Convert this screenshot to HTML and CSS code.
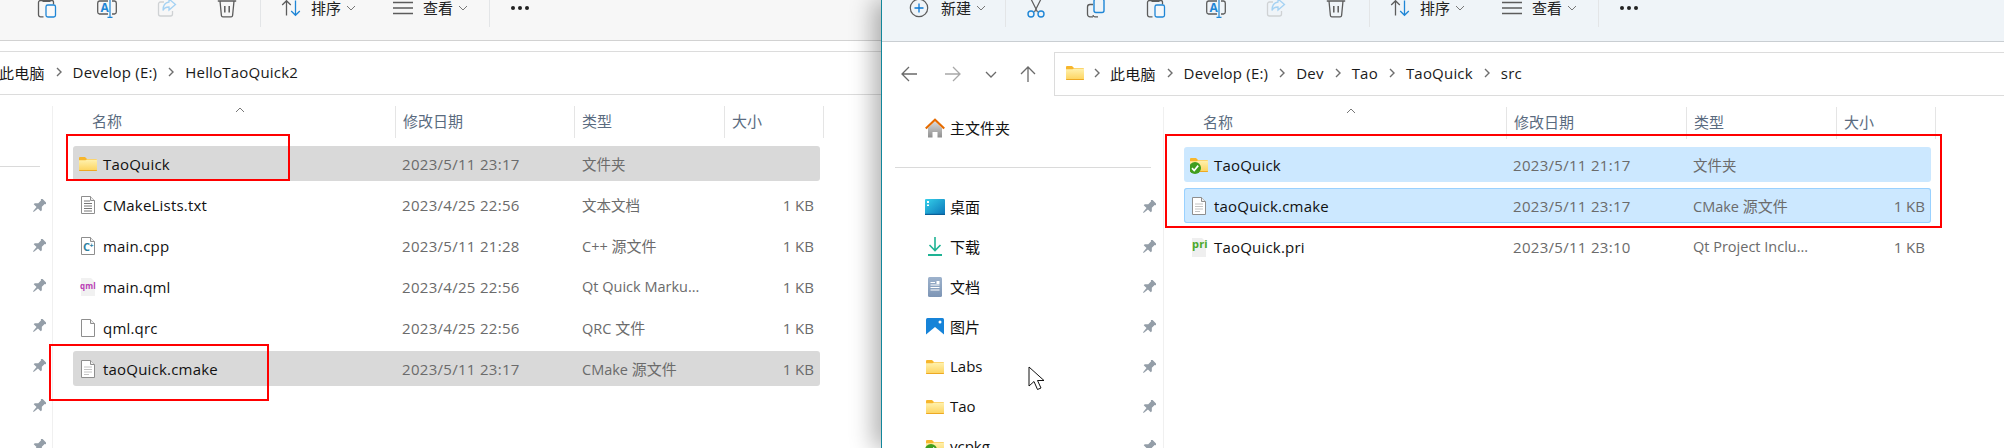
FILE: index.html
```html
<!DOCTYPE html>
<html lang="zh-CN">
<head>
  <meta charset="utf-8">
  <title>TaoQuick</title>
  <link rel="stylesheet" href="styles.css">
</head>
<body>
<svg class="defs" aria-hidden="true">
  <defs>
    <linearGradient id="folderFill" x1="0" y1="0" x2="0" y2="1"><stop offset="0" stop-color="#fff2b0"/><stop offset="1" stop-color="#fdd35c"/></linearGradient>
    <linearGradient id="deskFill" x1="0" y1="0" x2="1" y2="1"><stop offset="0" stop-color="#35d0ea"/><stop offset="1" stop-color="#0a74b8"/></linearGradient>
    <linearGradient id="docFill" x1="0" y1="0" x2="0" y2="1"><stop offset="0" stop-color="#9db2cc"/><stop offset="1" stop-color="#7d95b5"/></linearGradient>
    <linearGradient id="homeFill" x1="0" y1="0" x2="0" y2="1"><stop offset="0" stop-color="#d8d8d8"/><stop offset="1" stop-color="#8f8f8f"/></linearGradient>
    <symbol id="folder" viewBox="0 0 18 14">
      <path d="M0 1a1 1 0 0 1 1-1h5l2 2h9a1 1 0 0 1 1 1v3H0z" fill="#f7b62c"/>
      <path d="M0 3.2h6.5L8 2.4h10V13a1 1 0 0 1-1 1H1a1 1 0 0 1-1-1z" fill="url(#folderFill)"/>
      <path d="M0 13h18v.2a.8.8 0 0 1-.8.8H.8a.8.8 0 0 1-.8-.8z" fill="#eda923"/>
    </symbol>
    <symbol id="check" viewBox="0 0 12 12">
      <circle cx="6" cy="6" r="6" fill="#3f9e1f"/>
      <path d="M3 6.2l2.2 2.3L9.2 3.6" fill="none" stroke="#fff" stroke-width="1.7"/>
    </symbol>
    <symbol id="doc" viewBox="0 0 16 20">
      <path d="M1.5 1.5h9l4 4v13h-13z" fill="#fff" stroke="#8e8e8e"/>
      <path d="M10.5 1.5v4h4" fill="#eee" stroke="#8e8e8e"/>
    </symbol>
    <symbol id="pin" viewBox="0 0 14 14">
      <g transform="rotate(45 7 7)"><path d="M3.500-.5h7V1l-1 .5v4L12 8v1.500H8L7.400 15h-.8L6 9.500H2V8l2.500-2.500v-4l-1-.5z" fill="#949ea8"/></g>
    </symbol>
    <symbol id="crumb" viewBox="0 0 6 10">
      <path d="M1 1l4 4-4 4" fill="none" stroke="#6e6e6e" stroke-width="1.4"/>
    </symbol>
    <symbol id="drop" viewBox="0 0 10 6">
      <path d="M1 1l4 4 4-4" fill="none" stroke="#777" stroke-width="1"/>
    </symbol>
    <symbol id="i-paste" viewBox="0 0 20 20">
      <path d="M6.500 18.800H3.500a2 2 0 0 1-2-2V4.500a2 2 0 0 1 2-2H15a1.500 1.500 0 0 1 1.500 1.500v2.500" fill="none" stroke="#5c5c5c" stroke-width="1.300"/>
      <path d="M5.500 1h8v3h-8z" fill="#5c5c5c"/>
      <rect x="9" y="7" width="9.500" height="12" rx="1.800" fill="#fff" fill-opacity=".3" stroke="#1f86d6" stroke-width="1.300"/>
    </symbol>
    <symbol id="i-rename" viewBox="0 0 20 20">
      <path d="M11 16H2.500A2 2 0 0 1 .7 14V5a2 2 0 0 1 1.800-2H11M15 3h2.500a2 2 0 0 1 1.800 2v9a2 2 0 0 1-1.800 2H15" fill="none" stroke="#5c5c5c" stroke-width="1.300"/>
      <text class="icon-a" x="3.500" y="14">A</text>
      <path d="M13 1v18M10.500 19.300h5M10.500 1h5" fill="none" stroke="#1f86d6" stroke-width="1.200"/>
    </symbol>
    <symbol id="i-share" viewBox="0 0 20 20">
      <path d="M7 4H3.500a2 2 0 0 0-2 2v10a2 2 0 0 0 2 2h10a2 2 0 0 0 2-2v-3" fill="none" stroke="#cfd2d4" stroke-width="1.300"/>
      <path d="M12 1l6.500 5.500L12 12V9c-3 0-5 1-6 3.500C6 8 8 4.500 12 4z" fill="none" stroke="#a5d2f3" stroke-width="1.300"/>
    </symbol>
    <symbol id="i-delete" viewBox="0 0 20 20">
      <path d="M.8 3h18.400M3 3l1.400 14.500a1.500 1.500 0 0 0 1.500 1.300h8.200a1.500 1.500 0 0 0 1.500-1.300L17 3" fill="none" stroke="#5c5c5c" stroke-width="1.300"/>
      <path d="M7.800 8v6.500M12.200 8v6.500" fill="none" stroke="#5c5c5c" stroke-width="1.500"/>
    </symbol>
    <symbol id="i-cut" viewBox="0 0 20 20">
      <path d="M4.500 0l7 14M15.500 0l-7 14" fill="none" stroke="#5c5c5c" stroke-width="1.200"/>
      <circle cx="5" cy="16" r="3" fill="none" stroke="#1f86d6" stroke-width="1.400"/>
      <circle cx="15" cy="16" r="3" fill="none" stroke="#1f86d6" stroke-width="1.400"/>
    </symbol>
    <symbol id="i-copy" viewBox="0 0 20 20">
      <path d="M7 18.800H4a2.500 2.500 0 0 1-2.500-2.500V9A2.500 2.500 0 0 1 4 6.500h3" fill="none" stroke="#5c5c5c" stroke-width="1.300"/>
      <path d="M7 17a2 2 0 0 0 2 1.800h3" fill="none" stroke="#5c5c5c" stroke-width="1.300"/>
      <rect x="8" y="1" width="10" height="13.500" rx="2" fill="none" stroke="#1f86d6" stroke-width="1.400"/>
    </symbol>
    <symbol id="i-sort" viewBox="0 0 20 20">
      <path d="M5.500 17.500V3M1.200 7l4.300-4.300L9.800 7" fill="none" stroke="#5c5c5c" stroke-width="1.300"/>
      <path d="M14.500 2.500V17M10.200 13l4.300 4.300 4.300-4.300" fill="none" stroke="#1f86d6" stroke-width="1.300"/>
    </symbol>
    <symbol id="i-view" viewBox="0 0 20 20">
      <path d="M0 4.500h20M0 10h20M0 15.500h20" fill="none" stroke="#5c5c5c" stroke-width="1.500"/>
    </symbol>
    <symbol id="i-new" viewBox="0 0 20 20">
      <circle cx="10" cy="10" r="8.700" fill="none" stroke="#5c5c5c" stroke-width="1.200"/>
      <path d="M10 5.500v9M5.500 10h9" fill="none" stroke="#0a78d4" stroke-width="1.300"/>
    </symbol>
    <symbol id="i-left" viewBox="0 0 16 16">
      <path d="M16 8H1M8 1L1 8l7 7" fill="none" stroke="#6a6a6a" stroke-width="1.300"/>
    </symbol>
    <symbol id="i-right" viewBox="0 0 16 16">
      <path d="M0 8h15M8 1l7 7-7 7" fill="none" stroke="#a8a8a8" stroke-width="1.300"/>
    </symbol>
    <symbol id="i-up" viewBox="0 0 16 16">
      <path d="M8 16V1M1 8l7-7 7 7" fill="none" stroke="#6a6a6a" stroke-width="1.300"/>
    </symbol>
  </defs>
</svg>

<div class="desk">
  <div class="win win-left">
    <div class="toolbar">
      <div class="slots">
        <span class="slot"><svg class="ti"><use href="#i-paste"/></svg></span>
        <span class="slot"><svg class="ti"><use href="#i-rename"/></svg></span>
        <span class="slot"><svg class="ti"><use href="#i-share"/></svg></span>
        <span class="slot"><svg class="ti"><use href="#i-delete"/></svg></span>
      </div>
      <i class="tsep"></i>
      <span class="tool tool-sort"><svg class="ti"><use href="#i-sort"/></svg><b>排序</b><svg class="drop"><use href="#drop"/></svg></span>
      <span class="tool tool-view"><svg class="ti"><use href="#i-view"/></svg><b>查看</b><svg class="drop"><use href="#drop"/></svg></span>
      <i class="tsep"></i>
      <span class="dots"><i></i><i></i><i></i></span>
    </div>

    <div class="addr">
      <span class="crumb zh">此电脑</span><svg class="chev"><use href="#crumb"/></svg>
      <span class="crumb">Develop (E:)</span><svg class="chev"><use href="#crumb"/></svg>
      <span class="crumb">HelloTaoQuick2</span>
    </div>

    <div class="main">
      <div class="side">
        <div class="side-row"></div>
        <hr class="side-sep">
        <div class="side-row"><svg class="pin"><use href="#pin"/></svg></div>
        <div class="side-row"><svg class="pin"><use href="#pin"/></svg></div>
        <div class="side-row"><svg class="pin"><use href="#pin"/></svg></div>
        <div class="side-row"><svg class="pin"><use href="#pin"/></svg></div>
        <div class="side-row"><svg class="pin"><use href="#pin"/></svg></div>
        <div class="side-row"><svg class="pin"><use href="#pin"/></svg></div>
        <div class="side-row"><svg class="pin"><use href="#pin"/></svg></div>
      </div>

      <div class="list">
        <div class="head">
          <span class="hcell zh hname">名称<svg class="caret" viewBox="0 0 10 6"><path d="M1 5l4-4 4 4" fill="none" stroke="#777"/></svg></span>
          <span class="hcell zh">修改日期</span>
          <span class="hcell zh">类型</span>
          <span class="hcell zh hlast">大小</span>
        </div>
        <div class="row sel-gray">
          <span class="name"><svg class="fi fi-folder"><use href="#folder"/></svg>TaoQuick</span>
          <span class="date">2023/5/11 23:17</span><span class="type zh">文件夹</span><span class="size"></span>
        </div>
        <div class="row">
          <span class="name">
            <svg class="fi" viewBox="0 0 18 20"><use href="#doc" x="1" width="16" height="20"/><path d="M5 6h6M5 8.500h8M5 11h8M5 13.500h8M5 16h8" stroke="#777" fill="none"/></svg>CMakeLists.txt</span>
          <span class="date">2023/4/25 22:56</span><span class="type zh">文本文档</span><span class="size">1 KB</span>
        </div>
        <div class="row">
          <span class="name">
            <svg class="fi" viewBox="0 0 18 20"><use href="#doc" x="1" width="16" height="20"/><text class="glyph-cpp" x="4" y="15">C</text><text class="glyph-plus" x="10.500" y="12">+</text></svg>main.cpp</span>
          <span class="date">2023/5/11 21:28</span><span class="type">C++ <span class="zh">源文件</span></span><span class="size">1 KB</span>
        </div>
        <div class="row">
          <span class="name">
            <svg class="fi" viewBox="0 0 18 20"><path d="M2 1h10l4 4v14H2z" fill="#f1f1f1"/><text class="glyph-qml" x="1" y="12">qml</text></svg>main.qml</span>
          <span class="date">2023/4/25 22:56</span><span class="type">Qt Quick Marku...</span><span class="size">1 KB</span>
        </div>
        <div class="row">
          <span class="name">
            <svg class="fi" viewBox="0 0 18 20"><use href="#doc" x="1" width="16" height="20"/></svg>qml.qrc</span>
          <span class="date">2023/4/25 22:56</span><span class="type">QRC <span class="zh">文件</span></span><span class="size">1 KB</span>
        </div>
        <div class="row sel-gray">
          <span class="name">
            <svg class="fi" viewBox="0 0 18 20"><use href="#doc" x="1" width="16" height="20"/><path d="M5 8h8M5 10.500h8M5 13h8M5 15.500h5" stroke="#c4c4c4" fill="none"/></svg>taoQuick.cmake</span>
          <span class="date">2023/5/11 23:17</span><span class="type">CMake <span class="zh">源文件</span></span><span class="size">1 KB</span>
        </div>
      </div>
    </div>
  </div>

  <div class="win win-right">
    <div class="toolbar">
      <span class="tool tool-new"><svg class="ti"><use href="#i-new"/></svg><b>新建</b><svg class="drop"><use href="#drop"/></svg></span>
      <i class="tsep"></i>
      <div class="slots">
        <span class="slot"><svg class="ti"><use href="#i-cut"/></svg></span>
        <span class="slot"><svg class="ti"><use href="#i-copy"/></svg></span>
        <span class="slot"><svg class="ti"><use href="#i-paste"/></svg></span>
        <span class="slot"><svg class="ti"><use href="#i-rename"/></svg></span>
        <span class="slot"><svg class="ti"><use href="#i-share"/></svg></span>
        <span class="slot"><svg class="ti"><use href="#i-delete"/></svg></span>
      </div>
      <i class="tsep"></i>
      <span class="tool tool-sort"><svg class="ti"><use href="#i-sort"/></svg><b>排序</b><svg class="drop"><use href="#drop"/></svg></span>
      <span class="tool tool-view"><svg class="ti"><use href="#i-view"/></svg><b>查看</b><svg class="drop"><use href="#drop"/></svg></span>
      <i class="tsep"></i>
      <span class="dots"><i></i><i></i><i></i></span>
    </div>

    <div class="addr-wrap">
      <div class="nav">
        <svg class="na"><use href="#i-left"/></svg>
        <svg class="na na-fwd"><use href="#i-right"/></svg>
        <svg class="na-down" viewBox="0 0 12 7"><path d="M1 1l5 5 5-5" fill="none" stroke="#6a6a6a" stroke-width="1.300"/></svg>
        <svg class="na na-up"><use href="#i-up"/></svg>
      </div>
      <div class="addr addr-box">
        <svg class="fi fi-folder"><use href="#folder"/></svg><svg class="chev chev-first"><use href="#crumb"/></svg>
        <span class="crumb zh">此电脑</span><svg class="chev"><use href="#crumb"/></svg>
        <span class="crumb">Develop (E:)</span><svg class="chev"><use href="#crumb"/></svg>
        <span class="crumb">Dev</span><svg class="chev"><use href="#crumb"/></svg>
        <span class="crumb">Tao</span><svg class="chev"><use href="#crumb"/></svg>
        <span class="crumb">TaoQuick</span><svg class="chev"><use href="#crumb"/></svg>
        <span class="crumb">src</span>
      </div>
    </div>

    <div class="main">
      <div class="side">
        <div class="side-row">
          <svg class="si" viewBox="0 0 20 20"><path d="M3 10l7-6.500 7 6.500v9.500h-4.500V14h-5v5.500H3z" fill="url(#homeFill)"/><path d="M.8 10.500L10 1.800l9.200 8.700" fill="none" stroke="#e56b00" stroke-width="2.200"/></svg>
          <span class="side-text zh">主文件夹</span>
        </div>
        <hr class="side-sep">
        <div class="side-row">
          <svg class="si" viewBox="0 0 20 20"><rect y="2" width="20" height="16" rx="1" fill="url(#deskFill)"/><path d="M0 16.800h20V18H0z" fill="#0b5f97"/><path d="M2 4h2v2H2zM2 7.500h2v1.500H2z" fill="#fff"/></svg>
          <span class="side-text zh">桌面</span><svg class="pin"><use href="#pin"/></svg>
        </div>
        <div class="side-row">
          <svg class="si" viewBox="0 0 20 20"><path d="M10 0v13M4.500 8l5.500 5.500L15.500 8" fill="none" stroke="#1fb394" stroke-width="1.600"/><path d="M3 18h14" stroke="#1fb394" stroke-width="2" fill="none"/></svg>
          <span class="side-text zh">下载</span><svg class="pin"><use href="#pin"/></svg>
        </div>
        <div class="side-row">
          <svg class="si" viewBox="0 0 20 20"><rect x="3" width="14" height="20" rx="1.500" fill="url(#docFill)"/><path d="M5.500 5.500H10M5.500 8h9M5.500 10.500h9M5.500 13h9" stroke="#fff" fill="none"/><path d="M11.500 4h3v3h-3z" fill="#fff"/></svg>
          <span class="side-text zh">文档</span><svg class="pin"><use href="#pin"/></svg>
        </div>
        <div class="side-row">
          <svg class="si" viewBox="0 0 20 20"><rect x="1" y="1" width="18" height="18" rx="1.500" fill="#1683d8"/><path d="M1 17.500L10 10l9 7.500V19H1z" fill="#fff"/><circle cx="15" cy="5" r="1.500" fill="#fff"/></svg>
          <span class="side-text zh">图片</span><svg class="pin"><use href="#pin"/></svg>
        </div>
        <div class="side-row">
          <svg class="si" viewBox="0 0 20 20"><use href="#folder" x="1" y="3" width="18" height="14"/></svg>
          <span class="side-text">Labs</span><svg class="pin"><use href="#pin"/></svg>
        </div>
        <div class="side-row">
          <svg class="si" viewBox="0 0 20 20"><use href="#folder" x="1" y="3" width="18" height="14"/></svg>
          <span class="side-text">Tao</span><svg class="pin"><use href="#pin"/></svg>
        </div>
        <div class="side-row">
          <svg class="si" viewBox="0 0 20 20"><use href="#folder" x="1" y="3" width="18" height="14"/><use href="#check" x="0" y="7" width="12" height="12"/></svg>
          <span class="side-text">vcpkg</span><svg class="pin"><use href="#pin"/></svg>
        </div>
      </div>

      <div class="list">
        <div class="head">
          <span class="hcell zh hname">名称<svg class="caret" viewBox="0 0 10 6"><path d="M1 5l4-4 4 4" fill="none" stroke="#777"/></svg></span>
          <span class="hcell zh">修改日期</span>
          <span class="hcell zh">类型</span>
          <span class="hcell zh hlast">大小</span>
        </div>
        <div class="row sel-blue">
          <span class="name"><svg class="fi" viewBox="0 0 18 20"><use href="#folder" y="3" width="18" height="14"/><use href="#check" x="-1" y="7" width="12" height="12"/></svg>TaoQuick</span>
          <span class="date">2023/5/11 21:17</span><span class="type zh">文件夹</span><span class="size"></span>
        </div>
        <div class="row sel-blue row-focus">
          <span class="name">
            <svg class="fi" viewBox="0 0 18 20"><use href="#doc" x="1" width="16" height="20"/><path d="M5 8h8M5 10.500h8M5 13h8M5 15.500h5" stroke="#c4c4c4" fill="none"/></svg>taoQuick.cmake</span>
          <span class="date">2023/5/11 23:17</span><span class="type">CMake <span class="zh">源文件</span></span><span class="size">1 KB</span>
        </div>
        <div class="row">
          <span class="name">
            <svg class="fi" viewBox="0 0 18 20"><path d="M2 1h10l4 4v15H2z" fill="#efefef"/><text class="glyph-pri" x="2" y="11">pri</text></svg>TaoQuick.pri</span>
          <span class="date">2023/5/11 23:10</span><span class="type">Qt Project Inclu...</span><span class="size">1 KB</span>
        </div>
      </div>
    </div>
  </div>
</div>

<i class="mark mark-a"></i>
<i class="mark mark-b"></i>
<i class="mark mark-c"></i>
<svg class="cursor" viewBox="0 0 17 25"><path d="M1 1v19l5-4.500 3.500 8 3.500-1.500-3.500-7.500H16z" fill="#fff" stroke="#111" stroke-width="1"/></svg>
</body>
</html>
```

FILE: styles.css
```css
html, body {
  margin: 0;
  height: 448px;
  overflow: hidden;
  background: #fff;
}

body {
  position: relative;
  font-family: "Open Sans", "Noto Sans CJK SC", sans-serif;
  font-size: 15px;
  color: #111;
}

.defs { position: absolute; width: 0; height: 0; }

.zh { font-family: "Noto Sans CJK SC", sans-serif; font-size: 15px; letter-spacing: 0; }

.desk { display: flex; height: 448px; }

.win { display: flex; flex-direction: column; overflow: hidden; }
.win-left { width: 881px; flex: none; }
.win-right {
  flex: 1;
  min-width: 0;
  position: relative;
  border-left: 1px solid #11869b;
  box-shadow: -8px 0 22px rgba(0, 0, 0, .3);
}

/* toolbar, its top is cut off by the capture */
.toolbar {
  display: flex;
  align-items: flex-start;
  flex: none;
  height: 40px;
  overflow: hidden;
  background: #f7f7f7;
  border-bottom: 1px solid #d2d2d2;
}
.win-left .toolbar { padding-left: 17px; }
.win-right .toolbar {
  height: 41px;
  background: #eff4f8;
  border-bottom-color: #c9ced2;
  padding-left: 27px;
}

.slots { display: flex; }
.slot { display: flex; justify-content: center; align-items: center; width: 60px; height: 15px; }
.ti { width: 20px; height: 20px; flex: none; }
.tsep { flex: none; width: 1px; height: 27px; margin-left: 3px; background: #e3e5e7; }

.tool { display: flex; align-items: center; height: 15px; flex: none; }
.tool b { font: 400 15px/15px "Noto Sans CJK SC", sans-serif; color: #222; margin-left: 10px; width: 30px; }
.drop { width: 10px; height: 6px; margin-left: 5px; }
.tool-new { width: 93px; }
.tool-new .ti { margin-right: 2px; }
.tool-sort { width: 112px; margin-left: 20px; }
.tool-view { width: 93px; }
.dots { display: flex; gap: 3px; height: 15px; align-items: center; margin-left: 21px; }
.dots i { width: 4px; height: 4px; border-radius: 50%; background: #222; }

.icon-a { font: 700 12px "Open Sans", sans-serif; fill: #1f86d6; }
.glyph-cpp { font: 700 11px "Open Sans", sans-serif; fill: #2f7f9f; }
.glyph-plus { font: 700 7px "Open Sans", sans-serif; fill: #2f7f9f; }
.glyph-qml { font: 700 8px "Open Sans", sans-serif; fill: #b93bb5; }
.glyph-pri { font: 700 11px "Open Sans", sans-serif; fill: #4aa82a; }

/* address row */
.addr {
  display: flex;
  align-items: center;
  flex: none;
  height: 44px;
  box-sizing: border-box;
  margin-top: 10px;
  padding-bottom: 2px;
  border-top: 1px solid #dcdcdc;
  border-bottom: 1px solid #dcdcdc;
  color: #1a1a1a;
  white-space: nowrap;
}
.win-left .addr { margin-left: -1px; }
.crumb { flex: none; letter-spacing: .2px; }
.chev { width: 6px; height: 10px; margin: 0 11px; flex: none; }
.chev-first { margin-left: 10px; margin-right: 10px; }

.addr-wrap { display: flex; flex: none; }
.nav { display: flex; align-items: center; flex: none; width: 172px; margin-top: 10px; padding-left: 19px; box-sizing: border-box; }
.na { width: 16px; height: 16px; flex: none; }
.na-fwd { margin-left: 28px; }
.na-down { width: 12px; height: 7px; margin-left: 24px; flex: none; }
.na-up { margin-left: 23px; }
.addr-box { flex: 1; min-width: 0; border-left: 1px solid #dcdcdc; padding-left: 11px; overflow: hidden; }

/* main area */
.main { display: flex; flex: 1; min-height: 0; margin-top: 11px; }

.side { flex: none; width: 52px; border-right: 1px solid #f0f0f0; padding-top: 1px; }
.win-right .side { width: 281px; }
.side-row { display: flex; align-items: center; height: 40px; padding-right: 6px; justify-content: flex-end; }
.win-right .side-row { padding-left: 43px; padding-right: 7px; }
.side-sep { border: 0; height: 1px; background: #dadada; margin: 19px 12px 19px 0; }
.win-right .side-sep { margin-left: 13px; margin-right: 12px; }
.pin { width: 14px; height: 14px; flex: none; }
.si { width: 20px; height: 20px; flex: none; }
.side-text { flex: 1; margin-left: 5px; padding-bottom: 2px; color: #111; }

.list { flex: 1; min-width: 0; padding-left: 20px; }

.head {
  display: grid;
  grid-template-columns: 322px 179px 150px 100px;
  height: 32px;
  margin-bottom: 8px;
}
.win-right .head { grid-template-columns: 322px 180px 150px 100px; }
.hcell {
  display: flex;
  align-items: center;
  height: 32px;
  padding: 0 0 4px 7px;
  box-sizing: border-box;
  border-left: 1px solid #e5e5e5;
  color: #5a6b80;
}
.hname { position: relative; border-left: 0; padding-left: 19px; }
.hlast { border-right: 1px solid #e5e5e5; }
.caret { position: absolute; left: 162px; top: 1px; width: 10px; height: 6px; }

.row {
  display: grid;
  grid-template-columns: 329px 180px 150px 1fr;
  align-items: center;
  width: 747px;
  height: 35px;
  box-sizing: border-box;
  margin-bottom: 6px;
  border-radius: 3px;
  white-space: nowrap;
}
.sel-gray { background: #d9d9d9; }
.sel-blue { background: #cce8ff; }
.row-focus { box-shadow: inset 0 0 0 1px #99d1ff; }
.name { display: flex; align-items: center; padding-left: 6px; color: #111; letter-spacing: .2px; }
.date { color: #6b6b6b; letter-spacing: .3px; }
.type { color: #6b6b6b; font-size: 14.500px; }
.size { color: #6b6b6b; text-align: right; padding-right: 6px; }
.fi { width: 18px; height: 20px; flex: none; margin-right: 6px; }
.fi-folder { height: 14px; }
.addr .fi { margin-right: 0; }

/* hand-drawn marks over the screenshot */
.mark { position: absolute; box-sizing: border-box; border: 2px solid #f00; }
.mark-a { left: 66px; top: 134px; width: 224px; height: 47px; }
.mark-b { left: 49px; top: 344px; width: 220px; height: 57px; }
.mark-c { left: 1165px; top: 134px; width: 777px; height: 94px; }

.cursor { position: absolute; left: 1028px; top: 366px; width: 17px; height: 25px; }
```
